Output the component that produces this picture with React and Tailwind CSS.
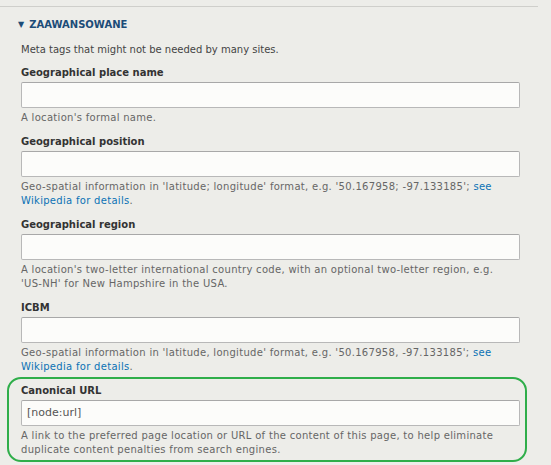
import React from "react";

const font = { fontFamily: '"DejaVu Sans", Verdana, sans-serif' };

function Field({ label, value, children }) {
  return (
    <div>
      <div className="text-[10px] leading-[16px] font-bold text-[#333]">{label}</div>
      <div className="mt-[1px] h-[26px] rounded-[2px] border border-[#b8b8b8] border-t-[#a8a8a8] bg-[#fcfcfa] px-[5px] text-[11px] leading-[24px] text-[#555]">
        {value}
      </div>
      <div className="mt-[3px] whitespace-nowrap text-[10px] leading-[14.5px] tracking-[0.3px] text-[#666]">{children}</div>
    </div>
  );
}

function Wiki({ first }) {
  return <a className="text-[#0b72b5]">{first}</a>;
}

export default function App() {
  return (
    <div className="h-[465px] w-[551px] overflow-hidden bg-[#edede9]" style={font}>
      <div className="w-[538px] pt-[6px]">
        <div className="border-t border-[#cfcfcb]" />
        <div className="mt-[10px] flex items-center pl-[18px] text-[10px] leading-[16px] font-bold text-[#1c4c78]">
          <span className="text-[8px] mr-[5px]">▼</span>
          <span>ZAAWANSOWANE</span>
        </div>
        <div className="pl-[21px] pr-[18px]">
          <p className="mt-[10px] text-[10px] leading-[14px] text-[#444]">
            Meta tags that might not be needed by many sites.
          </p>
          <div className="mt-[8px] flex flex-col gap-[8px]">
            <Field label="Geographical place name">A location's formal name.</Field>
            <Field label="Geographical position">
              Geo-spatial information in 'latitude; longitude' format, e.g. '50.167958; -97.133185'; <Wiki first="see" />
              <br />
              <Wiki first="Wikipedia for details" />.
            </Field>
            <Field label="Geographical region">
              A location's two-letter international country code, with an optional two-letter region, e.g.
              <br />
              'US-NH' for New Hampshire in the USA.
            </Field>
            <Field label="ICBM">
              Geo-spatial information in 'latitude, longitude' format, e.g. '50.167958, -97.133185'; <Wiki first="see" />
              <br />
              <Wiki first="Wikipedia for details" />.
            </Field>
          </div>
        </div>
        <div className="ml-[7px] mr-[11px] mt-[2px] rounded-[14px] border-2 border-[#2fae4a] pl-[12px] pr-[5px] pt-[4px] pb-[2px]">
          <Field label="Canonical URL" value="[node:url]">
            A link to the preferred page location or URL of the content of this page, to help eliminate
            <br />
            duplicate content penalties from search engines.
          </Field>
        </div>
      </div>
    </div>
  );
}
